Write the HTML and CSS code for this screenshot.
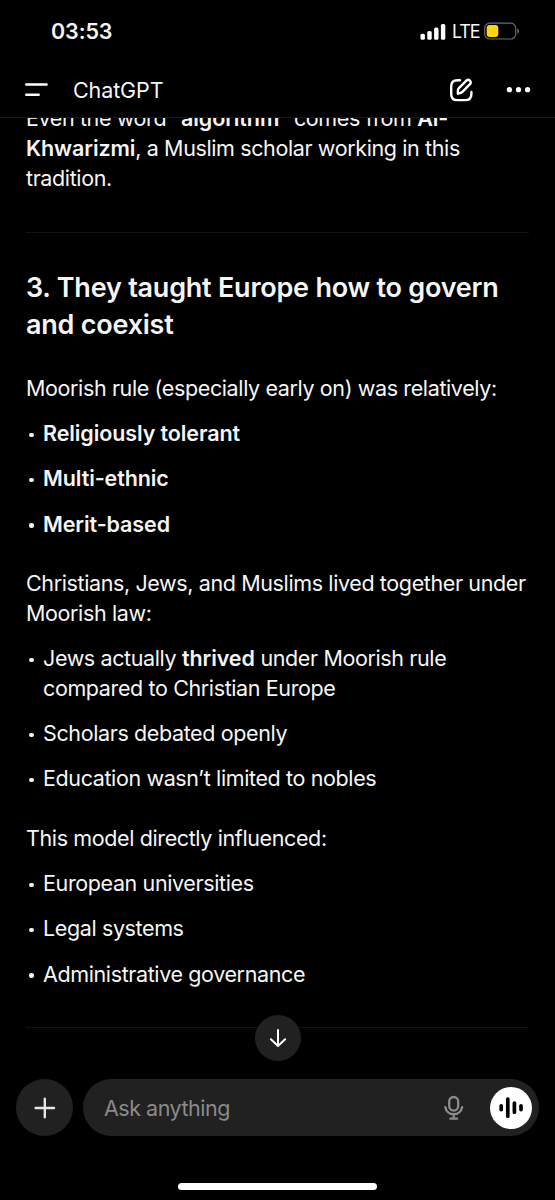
FILE: index.html
```
<!DOCTYPE html>
<html lang="en">
<head>
<meta charset="utf-8">
<title>ChatGPT</title>
<link rel="stylesheet" href="styles.css">
</head>
<body>
<div class="screen">
  <div class="status">
    <span class="time">03:53</span>
    <div class="status-right">
      <svg class="signal" width="26" height="17" viewBox="0 0 26 17" fill="#fff"><rect x="0.5" y="10.8" width="4.4" height="6" rx="1.5"/><rect x="7.3" y="8" width="4.4" height="8.8" rx="1.5"/><rect x="14.1" y="4.6" width="4.4" height="12.2" rx="1.5"/><rect x="20.9" y="0.9" width="4.4" height="15.9" rx="1.5"/></svg>
      <span class="lte">LTE</span>
      <svg class="battery" width="36" height="18" viewBox="0 0 36 18"><rect x="0.7" y="1.2" width="31" height="15.800" rx="5" fill="none" stroke="#6b6b6b" stroke-width="1.2"/><rect x="2.700" y="3" width="11.600" height="12" rx="3" fill="#ffd60a"/><path d="M33.300 6.400v5.400c1.100-.5 1.800-1.500 1.800-2.700s-.7-2.200-1.800-2.700z" fill="#6b6b6b"/></svg>
    </div>
  </div>
  <header class="nav">
    <svg class="menu" width="24" height="16" viewBox="0 0 24 16" stroke="#fff" stroke-width="2.400" stroke-linecap="round"><path d="M2.200 2.500h20.400M2.200 12.700h12.500"/></svg>
    <span class="title">ChatGPT</span>
    <svg class="compose" width="26" height="26" viewBox="0 0 26 26" fill="none" stroke="#fff" stroke-width="2.400" stroke-linecap="round" stroke-linejoin="round"><path d="M11 3.200H8.500C4.500 3.200 2.200 5.500 2.200 9.300v7.600c0 4 2.200 6.200 6.300 6.200h7.600c4 0 6.300-2.200 6.300-6.200v-2"/><path d="M8.900 16.700v-3.100c0-1 .3-1.700 1-2.400l7.500-7.500c1-1 2.500-1 3.500 0 1.100 1.100 1.100 2.500.1 3.500l-7.600 7.700c-.7.700-1.400 1-2.300 1.200z"/></svg>
    <svg class="dots" width="26" height="6" viewBox="0 0 26 6" fill="#fff"><circle cx="3.400" cy="2.700" r="2.600"/><circle cx="12.500" cy="2.700" r="2.600"/><circle cx="21.600" cy="2.700" r="2.600"/></svg>
  </header>
  <main class="chat">
    <p class="clipped">Even the word “<b>algorithm</b>” comes from <b>Al-<br>Khwarizmi</b>, a Muslim scholar working in this<br>tradition.</p>
    <hr class="rule">
    <h2>3. They taught Europe how to govern<br>and coexist</h2>
    <p>Moorish rule (especially early on) was relatively:</p>
    <ul>
      <li><b>Religiously tolerant</b></li>
      <li><b>Multi-ethnic</b></li>
      <li><b>Merit-based</b></li>
    </ul>
    <p>Christians, Jews, and Muslims lived together under<br>Moorish law:</p>
    <ul>
      <li>Jews actually <b>thrived</b> under Moorish rule<br>compared to Christian Europe</li>
      <li>Scholars debated openly</li>
      <li>Education wasn’t limited to nobles</li>
    </ul>
    <p>This model directly influenced:</p>
    <ul>
      <li>European universities</li>
      <li>Legal systems</li>
      <li>Administrative governance</li>
    </ul>
    <hr class="rule last">
    <div class="scroll-down">
      <svg width="18" height="20" viewBox="0 0 18 20" fill="none" stroke="#fff" stroke-width="2" stroke-linecap="round" stroke-linejoin="round"><path d="M9 2v16M1.900 11.300L9 18l7.100-6.700"/></svg>
    </div>
  </main>
  <footer class="composer">
    <div class="plus"><svg width="22" height="22" viewBox="0 0 22 22" stroke="#e6e6e6" stroke-width="2.400" stroke-linecap="round"><path d="M10.800 1.800v18.400M1.600 11H20"/></svg></div>
    <div class="field">
      <span class="placeholder">Ask anything</span>
      <svg class="mic" width="20" height="26" viewBox="0 0 20 26" fill="none" stroke="#8c8c8c" stroke-width="2.300" stroke-linecap="round"><rect x="5.200" y="2" width="9" height="13.600" rx="4.500"/><path d="M1.300 12.200c.8 4.200 4.200 7 8.400 7s7.600-2.800 8.400-7M9.700 19.500v4M6.300 23.700h6.800"/></svg>
      <div class="voice"><svg width="26" height="24" viewBox="0 0 26 24" stroke="#000" stroke-width="3.700" stroke-linecap="round"><path d="M3.200 9.800v3.800M9.800 3v17.200M16.400 7v9.200M23 9.800v3.800"/></svg></div>
    </div>
  </footer>
  <div class="home"></div>
</div>
</body>
</html>
```
FILE: styles.css
```
* { box-sizing: border-box; }
body { margin: 0; background: #000; color: #f5f5f5; font-family: Inter, "Liberation Sans", sans-serif; }
svg { display: block; flex: none; }
.screen { width: 555px; height: 1200px; overflow: hidden; display: flex; flex-direction: column; background: #000; }

.status { height: 62px; flex: none; display: flex; align-items: center; justify-content: space-between; padding: 0 35px 0 51px; }
.time { font-size: 21.500px; font-weight: 600; line-height: 26px; letter-spacing: -0.100px; }
.status-right { display: flex; align-items: center; }
.signal { margin-right: 6px; }
.lte { width: 27px; margin-right: 5px; font-size: 18px; line-height: 22px; letter-spacing: -1.200px; font-weight: 400; padding-top: 2px; }

.nav { height: 56px; flex: none; display: flex; align-items: center; padding: 0 23px 0 24px; border-bottom: 1px solid #181818; }
.title { margin-left: 25px; margin-right: auto; font-size: 21.500px; line-height: 28px; letter-spacing: -0.100px; }
.compose { margin-right: 31px; }

.chat { position: relative; height: 961px; flex: none; overflow: hidden; padding: 0 26px; font-size: 21.500px; line-height: 29.800px; letter-spacing: -0.380px; white-space: nowrap; }
p, ul, h2 { margin: 0; }
b { font-weight: 600; letter-spacing: -0.100px; }
.clipped { margin-top: -13.600px; }
.rule { height: 1px; border: 0; margin: 38.100px 0 36px; background: #131313; }
.rule.last { margin: 37.500px 0 0; }
h2 { font-size: 27px; line-height: 37.600px; font-weight: 600; letter-spacing: -0.230px; margin-bottom: 29.700px; }
ul { list-style: none; padding: 15.500px 0 0; display: flex; flex-direction: column; gap: 15.500px; }
ul + p { margin-top: 29.500px; }
li { position: relative; padding-left: 17px; }
li::before { content: ""; position: absolute; left: 3px; top: 13.500px; width: 4.500px; height: 4.500px; border-radius: 50%; background: #f5f5f5; }
.scroll-down { position: absolute; left: 254.500px; top: 897px; width: 46px; height: 46px; border-radius: 50%; background: #212121; display: grid; place-items: center; }

.composer { height: 58px; flex: none; display: flex; gap: 10px; padding: 0 16px; }
.plus { width: 57px; height: 57px; border-radius: 50%; background: #212121; display: grid; place-items: center; }
.field { flex: 1; height: 57px; border-radius: 29px; background: #212121; display: flex; align-items: center; padding: 0 7px 0 21px; }
.placeholder { margin-right: auto; color: #8a8a8a; font-size: 21.500px; line-height: 28px; letter-spacing: -0.480px; padding-top: 1px; }
.mic { margin-right: 26px; }
.voice { width: 42px; height: 42px; border-radius: 50%; background: #fff; display: grid; place-items: center; }
.home { width: 199px; height: 7px; border-radius: 4px; background: #fff; margin: 46px 0 0 178px; flex: none; }
```
